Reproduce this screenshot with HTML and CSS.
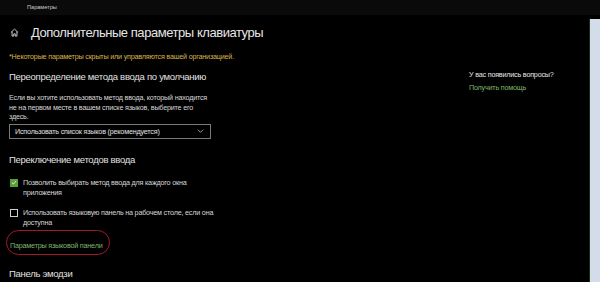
FILE: index.html
```html
<!DOCTYPE html>
<html lang="ru">
<head>
    <meta charset="UTF-8">
    <title>Параметры</title>
    <link rel="stylesheet" href="styles.css">
</head>
<body>
    <div class="titlebar">Параметры</div>
    <div class="window">
        <main class="content">
            <h1 class="page-title">
                <svg class="home" viewBox="0 0 10 10" width="9" height="9">
                    <path d="M1 5 L5 1.2 L9 5 M2.3 4 V9 H4.2 V6.5 H5.8 V9 H7.7 V4" fill="none" stroke="#ddd" stroke-width="1"/>
                </svg>
                Дополнительные параметры клавиатуры
            </h1>
            <p class="policy">*Некоторые параметры скрыты или управляются вашей организацией.</p>

            <h2 class="first-title">Переопределение метода ввода по умолчанию</h2>
            <p class="desc">Если вы хотите использовать метод ввода, который находится<br>не на первом месте в вашем списке языков, выберите его<br>здесь.</p>
            <div class="select">
                <span>Использовать список языков (рекомендуется)</span>
                <svg viewBox="0 0 10 6" width="7" height="4">
                    <path d="M1 1 L5 5 L9 1" fill="none" stroke="#bbb" stroke-width="1.2"/>
                </svg>
            </div>

            <h2 class="switch-title">Переключение методов ввода</h2>
            <label class="check">
                <span class="box checked">
                    <svg viewBox="0 0 10 10" width="7" height="7">
                        <path d="M1.5 5.2 L4 7.6 L8.6 2.4" fill="none" stroke="#fff" stroke-width="1.4"/>
                    </svg>
                </span>
                <span>Позволить выбирать метод ввода для каждого окна<br>приложения</span>
            </label>
            <label class="check">
                <span class="box"></span>
                <span>Использовать языковую панель на рабочем столе, если она<br>доступна</span>
            </label>
            <div class="link-row">
                <a class="link" href="#">Параметры языковой панели</a>
                <span class="mark"></span>
            </div>

            <h2 class="emoji-title">Панель эмодзи</h2>
        </main>
        <aside class="help">
            <div class="help-q">У вас появились вопросы?</div>
            <a class="link" href="#">Получить помощь</a>
        </aside>
        <div class="edge"></div>
    </div>
</body>
</html>
```

FILE: styles.css
```css
body {
    margin: 0;
    background: #000;
    color: #e2e2e2;
    font-family: "Liberation Sans", Arial, sans-serif;
    overflow: hidden;
}
.titlebar {
    height: 15px;
    line-height: 15px;
    padding-left: 27px;
    font-size: 5.6px;
    color: #cfcfcf;
    background: #0a0a0a;
}
.window {
    display: grid;
    grid-template-columns: 469px 1fr 11px;
    height: 267px;
}
.content {
    padding-left: 9px;
}
.page-title {
    display: flex;
    align-items: center;
    gap: 12px;
    margin: 9px 0 0 0;
    height: 16px;
    font-size: 13px;
    letter-spacing: -0.45px;
    font-weight: normal;
    color: #e6e6e6;
}
.home {
    margin-left: 1px;
}
.policy {
    margin: 12px 0 0 0;
    font-size: 7.2px;
    letter-spacing: -0.2px;
    line-height: 10px;
    color: #d8b54a;
}
h2 {
    margin: 0;
    font-size: 9.5px;
    letter-spacing: -0.28px;
    line-height: 12px;
    font-weight: normal;
    color: #e2e2e2;
}
.first-title {
    margin-top: 9px;
}
.desc {
    margin: 10px 0 0 0;
    font-size: 7.2px;
    letter-spacing: -0.2px;
    line-height: 9.5px;
    color: #d6d6d6;
}
.select {
    width: 189px;
    height: 13px;
    margin-top: 2px;
    padding: 0 6px 0 5px;
    border: 1px solid #7a7a7a;
    display: flex;
    align-items: center;
    justify-content: space-between;
    font-size: 7.2px;
    letter-spacing: -0.2px;
    color: #e0e0e0;
}
.switch-title {
    margin-top: 15px;
}
.check {
    display: flex;
    gap: 5px;
    margin-top: 12px;
    font-size: 7.2px;
    letter-spacing: -0.2px;
    line-height: 10px;
    color: #d6d6d6;
}
.check + .check {
    margin-top: 10px;
}
.box {
    flex: none;
    width: 6px;
    height: 6px;
    margin: 1px 0 0 1px;
    border: 1px solid #cfcfcf;
    display: flex;
    align-items: center;
    justify-content: center;
}
.box.checked {
    background: #5a9e3a;
    border-color: #5a9e3a;
}
.link {
    font-size: 7.2px;
    letter-spacing: -0.2px;
    color: #7fb56a;
    text-decoration: none;
}
.link-row {
    position: relative;
    margin-top: 10px;
    padding-left: 1px;
    line-height: 10px;
}
.mark {
    position: absolute;
    left: -3px;
    top: -8px;
    width: 102px;
    height: 23px;
    border: 1.5px solid #a3182b;
    border-radius: 13px;
}
.emoji-title {
    margin-top: 17px;
}
.help {
    padding-top: 53px;
    font-size: 7.2px;
    letter-spacing: -0.2px;
    line-height: 13px;
}
.help-q {
    color: #e6e6e6;
}
.edge {
    margin-top: 4px;
    background: #d3ddea;
    border-left: 1px solid #1c2a14;
}
```
